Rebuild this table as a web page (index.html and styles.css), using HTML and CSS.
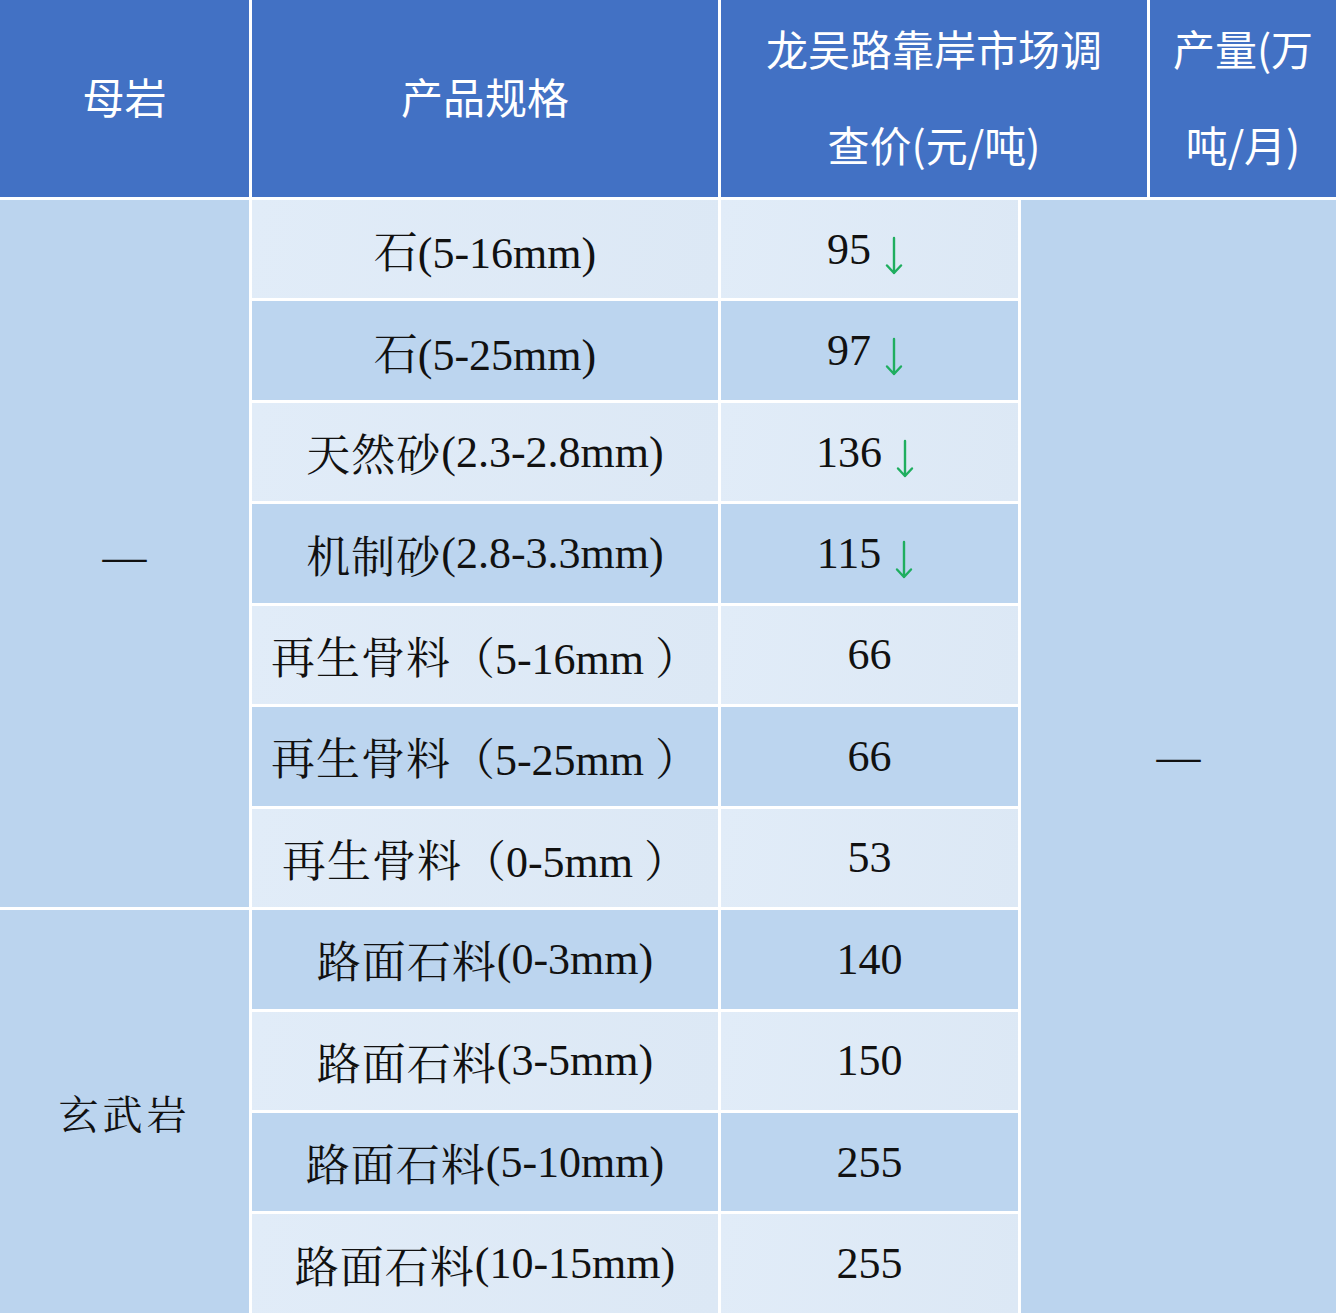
FILE: index.html
```html
<!DOCTYPE html>
<html lang="zh">
<head>
<meta charset="utf-8">
<title>价格表</title>
<link rel="stylesheet" href="styles.css">
</head>
<body>
<div class="table">
  <div class="head">
    <div class="th">母岩</div>
    <div class="th">产品规格</div>
    <div class="th">龙吴路靠岸市场调<br>查价(元/吨)</div>
    <div class="th">产量(万<br>吨/月)</div>
  </div>
  <div class="grid">
    <div class="rock rock-a">—</div>
    <div class="rock rock-b"><span class="spaced">玄武岩</span></div>
    <div class="output">—</div>

    <div class="cell light">石(5-16mm)</div>
    <div class="cell light trend"><span>95</span><svg class="down" viewBox="0 0 18 40" width="18" height="40"><path d="M9 2 V37 M2 29.5 L9 37 L16 29.5"/></svg></div>

    <div class="cell dark">石(5-25mm)</div>
    <div class="cell dark trend"><span>97</span><svg class="down" viewBox="0 0 18 40" width="18" height="40"><path d="M9 2 V37 M2 29.5 L9 37 L16 29.5"/></svg></div>

    <div class="cell light"><span class="cjk-sp">天然砂</span>(2.3-2.8mm)</div>
    <div class="cell light trend"><span>136</span><svg class="down" viewBox="0 0 18 40" width="18" height="40"><path d="M9 2 V37 M2 29.5 L9 37 L16 29.5"/></svg></div>

    <div class="cell dark"><span class="cjk-sp">机制砂</span>(2.8-3.3mm)</div>
    <div class="cell dark trend"><span>115</span><svg class="down" viewBox="0 0 18 40" width="18" height="40"><path d="M9 2 V37 M2 29.5 L9 37 L16 29.5"/></svg></div>

    <div class="cell light"><span class="cjk-sp">再生骨料</span>（5-16mm ）</div>
    <div class="cell light">66</div>

    <div class="cell dark"><span class="cjk-sp">再生骨料</span>（5-25mm ）</div>
    <div class="cell dark">66</div>

    <div class="cell light"><span class="cjk-sp">再生骨料</span>（0-5mm ）</div>
    <div class="cell light">53</div>

    <div class="cell dark"><span class="cjk-sp">路面石料</span>(0-3mm)</div>
    <div class="cell dark">140</div>

    <div class="cell light"><span class="cjk-sp">路面石料</span>(3-5mm)</div>
    <div class="cell light">150</div>

    <div class="cell dark"><span class="cjk-sp">路面石料</span>(5-10mm)</div>
    <div class="cell dark">255</div>

    <div class="cell light"><span class="cjk-sp">路面石料</span>(10-15mm)</div>
    <div class="cell light">255</div>
  </div>
</div>
</body>
</html>
```

FILE: styles.css
```css
html, body {
  margin: 0;
  padding: 0;
  background: #ffffff;
}

.table {
  width: 1336px;
  background: #ffffff;
}

.head {
  display: grid;
  grid-template-columns: 249px 466px 426px 1fr;
  grid-template-rows: 197px;
  column-gap: 3px;
  height: 197px;
  margin-bottom: 3px;
}

.th {
  background: #4271c4;
  color: #ffffff;
  font-family: "Noto Sans CJK SC", "Noto Sans", sans-serif;
  font-weight: 400;
  font-size: 42px;
  line-height: 96px;
  display: flex;
  align-items: center;
  justify-content: center;
  text-align: center;
  padding-bottom: 5px;
  box-sizing: border-box;
  overflow: hidden;
}

.grid {
  display: grid;
  grid-template-columns: 249px 466px 297px 1fr;
  grid-template-rows: repeat(11, 98.45px);
  column-gap: 3px;
  row-gap: 3px;
  padding-bottom: 3px;
  font-family: "Liberation Serif", "Noto Serif CJK SC", "Noto Sans CJK SC", serif;
  font-size: 44px;
  color: #111111;
}

.rock, .output, .cell {
  display: flex;
  align-items: center;
  justify-content: center;
  white-space: nowrap;
}

.rock {
  grid-column: 1;
  background: #bbd4ee;
}

.rock-a {
  grid-row: 1 / 8;
  padding-top: 6px;
}

.rock-b {
  grid-row: 8 / 12;
  font-size: 40px;
}

.spaced {
  letter-spacing: 4px;
}

.output {
  grid-column: 4;
  grid-row: 1 / 12;
  background: #bbd4ee;
}

.light {
  background: linear-gradient(100deg, #e1ecf8 0%, #dce8f5 100%);
}

.dark {
  background: #bcd5ef;
}

.cjk-sp {
  letter-spacing: 1px;
}

.trend {
  align-items: baseline;
  padding-top: 28px;
  box-sizing: border-box;
}

.trend > span {
  line-height: 1;
}

.down {
  align-self: flex-start;
  margin-left: 14px;
  margin-right: 9px;
  margin-top: 8px;
}

.down path {
  fill: none;
  stroke: #1fae5f;
  stroke-width: 2.4;
  stroke-linecap: round;
  stroke-linejoin: round;
}
```
